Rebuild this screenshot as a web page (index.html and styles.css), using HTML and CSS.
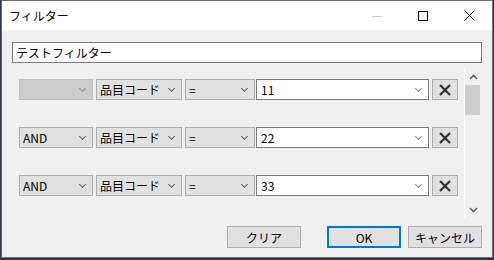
FILE: index.html
```html
<!DOCTYPE html>
<html lang="ja">
<head>
  <meta charset="UTF-8">
  <title>フィルター</title>
  <link rel="stylesheet" href="styles.css">
</head>
<body>

  <div class="window">
    <div class="titlebar">
      <div class="title">フィルター</div>
      <div class="caption-buttons">
        <span class="cap-btn">
          <svg width="10" height="10" viewBox="0 0 10 10"><line x1="0" y1="5.5" x2="10" y2="5.5" stroke="#c8c8c8" stroke-width="1"/></svg>
        </span>
        <span class="cap-btn">
          <svg width="10" height="10" viewBox="0 0 10 10"><rect x="0.5" y="0.5" width="9" height="9" fill="none" stroke="#000" stroke-width="1"/></svg>
        </span>
        <span class="cap-btn">
          <svg width="11" height="11" viewBox="0 0 11 11"><path d="M0.5 0.5 L10.5 10.5 M10.5 0.5 L0.5 10.5" stroke="#000" stroke-width="1"/></svg>
        </span>
      </div>
    </div>

    <div class="client">
      <div class="textbox">テストフィルター</div>

      <div class="scroll-area">
        <div class="rows">
          <!-- row 1 -->
          <div class="row">
            <div class="combo combo-logic disabled"><span></span><i class="chev"></i></div>
            <div class="combo combo-field"><span>品目コード</span><i class="chev"></i></div>
            <div class="combo combo-op"><span>=</span><i class="chev"></i></div>
            <div class="combo combo-value"><span>11</span><i class="chev"></i></div>
            <div class="del-btn"><svg width="14" height="14" viewBox="0 0 14 14"><path d="M2 2 L12 12 M12 2 L2 12" stroke="#333" stroke-width="2.2"/></svg></div>
          </div>
          <!-- row 2 -->
          <div class="row">
            <div class="combo combo-logic"><span>AND</span><i class="chev"></i></div>
            <div class="combo combo-field"><span>品目コード</span><i class="chev"></i></div>
            <div class="combo combo-op"><span>=</span><i class="chev"></i></div>
            <div class="combo combo-value"><span>22</span><i class="chev"></i></div>
            <div class="del-btn"><svg width="14" height="14" viewBox="0 0 14 14"><path d="M2 2 L12 12 M12 2 L2 12" stroke="#333" stroke-width="2.2"/></svg></div>
          </div>
          <!-- row 3 -->
          <div class="row">
            <div class="combo combo-logic"><span>AND</span><i class="chev"></i></div>
            <div class="combo combo-field"><span>品目コード</span><i class="chev"></i></div>
            <div class="combo combo-op"><span>=</span><i class="chev"></i></div>
            <div class="combo combo-value"><span>33</span><i class="chev"></i></div>
            <div class="del-btn"><svg width="14" height="14" viewBox="0 0 14 14"><path d="M2 2 L12 12 M12 2 L2 12" stroke="#333" stroke-width="2.2"/></svg></div>
          </div>
        </div>

        <div class="scrollbar">
          <div class="sb-arrow">
            <svg width="9" height="6" viewBox="0 0 9 6"><polyline points="1,5 4.5,1.5 8,5" fill="none" stroke="#606060" stroke-width="1.6"/></svg>
          </div>
          <div class="sb-track">
            <div class="sb-thumb"></div>
          </div>
          <div class="sb-arrow">
            <svg width="9" height="6" viewBox="0 0 9 6"><polyline points="1,1 4.5,4.5 8,1" fill="none" stroke="#606060" stroke-width="1.6"/></svg>
          </div>
        </div>
      </div>

      <div class="buttons">
        <button class="btn btn-clear">クリア</button>
        <button class="btn btn-ok">OK</button>
        <button class="btn btn-cancel">キャンセル</button>
      </div>
    </div>
  </div>

</body>
</html>
```

FILE: styles.css
```css
body {
  margin: 0;
  padding: 0 0 0 1px;
  background: #2e3440;
  font-family: "Noto Sans CJK JP", "Noto Sans", sans-serif;
  font-size: 12px;
  color: #000;
  width: 494px;
  height: 260px;
  overflow: hidden;
}

.window {
  width: 490px;
  height: 256px;
  border: 1px solid #6f6f6f;
  background: #f0f0f0;
  display: flex;
  flex-direction: column;
}

/* title bar */
.titlebar {
  height: 29px;
  background: #fff;
  display: flex;
  align-items: center;
  justify-content: space-between;
}

.title {
  padding-left: 7px;
  font-size: 12px;
  line-height: 14px;
  margin-top: 1px;
}

.caption-buttons {
  display: flex;
  height: 100%;
}

.cap-btn {
  width: 46px;
  display: flex;
  align-items: center;
  justify-content: center;
}

/* client area */
.client {
  padding: 12px 10px 0 10px;
  display: flex;
  flex-direction: column;
}

.textbox {
  height: 19px;
  border: 1px solid #7a7a7a;
  background: #fff;
  padding-left: 3px;
  line-height: 19px;
  font-size: 12px;
}

.scroll-area {
  margin-top: 5px;
  height: 150px;
  display: flex;
}

.rows {
  flex: 1;
  padding: 11px 0 0 7px;
  display: flex;
  flex-direction: column;
  gap: 27px;
}

.row {
  display: flex;
  height: 21px;
}

.combo {
  box-sizing: border-box;
  height: 21px;
  border: 1px solid #adadad;
  background: #e1e1e1;
  display: flex;
  align-items: center;
  justify-content: space-between;
  padding: 0 7px 0 3px;
  margin-right: 3px;
  font-size: 12px;
}

.combo span {
  line-height: 19px;
}

.combo-logic { width: 74px; }
.combo-field { width: 86px; }
.combo-op { width: 70px; margin-right: 1px; }

.combo-value {
  width: 173px;
  background: #fff;
  border-color: #7a7a7a;
  padding-left: 4px;
}

.combo.disabled {
  background: #cccccc;
  border-color: #bfbfbf;
}

.chev {
  width: 4px;
  height: 4px;
  border-right: 1px solid #606060;
  border-bottom: 1px solid #606060;
  transform: rotate(45deg);
  margin-top: -3px;
}

.combo.disabled .chev,
.combo-value .chev {
  border-color: #8a8a8a;
}

.del-btn {
  box-sizing: border-box;
  width: 26px;
  height: 21px;
  border: 1px solid #adadad;
  background: #e1e1e1;
  display: flex;
  align-items: center;
  justify-content: center;
}

/* scrollbar */
.scrollbar {
  width: 16px;
  border-left: 1px solid #fff;
  margin-right: 1px;
  display: flex;
  flex-direction: column;
}

.sb-arrow {
  height: 17px;
  display: flex;
  align-items: center;
  justify-content: center;
}

.sb-track {
  flex: 1;
}

.sb-thumb {
  width: 15px;
  height: 30px;
  background: #cdcdcd;
}

/* bottom buttons */
.buttons {
  margin-top: 8px;
  display: flex;
  padding-left: 215px;
}

.btn {
  box-sizing: border-box;
  width: 74px;
  height: 22px;
  border: 1px solid #adadad;
  background: #e1e1e1;
  font-family: "Noto Sans CJK JP", "Noto Sans", sans-serif;
  font-size: 12px;
  padding: 0;
  color: #000;
}

.btn-ok {
  margin-left: 26px;
  border: 2px solid #0078d7;
}

.btn-cancel {
  margin-left: 7px;
}
```
